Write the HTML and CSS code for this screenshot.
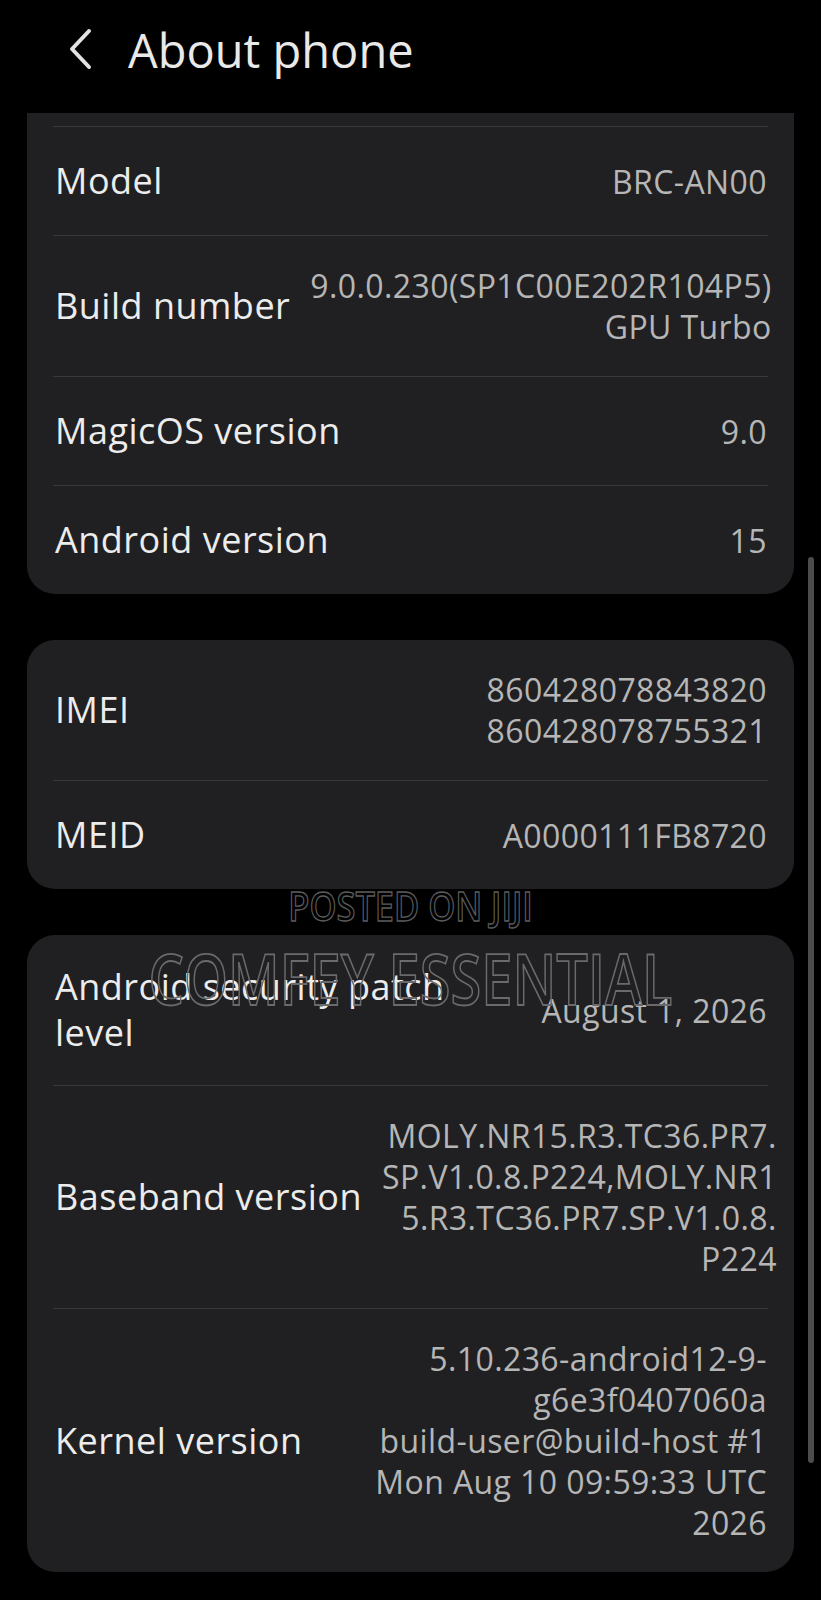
FILE: index.html
```html
<!DOCTYPE html>
<html lang="en">
<head>
  <meta charset="UTF-8">
  <title>About phone</title>
  <link rel="stylesheet" href="styles.css">
</head>
<body>

  <div class="screen">
    <header class="topbar">
      <svg class="back" width="28" height="44" viewBox="0 0 28 44">
        <path d="M20 3 L3 21 L20 39" fill="none" stroke="#e2e2e2" stroke-width="4" stroke-linecap="round" stroke-linejoin="round"/>
      </svg>
      <h1>About phone</h1>
    </header>

    <!-- first group, scrolled under the title bar -->
    <section class="card card-cut">
      <div class="row">
        <span class="label">Model</span>
        <span class="value">BRC-AN00</span>
      </div>
      <div class="row">
        <span class="label">Build number</span>
        <span class="value">9.0.0.230(SP1C00E202R104P5)<br>GPU Turbo</span>
      </div>
      <div class="row">
        <span class="label">MagicOS version</span>
        <span class="value">9.0</span>
      </div>
      <div class="row">
        <span class="label">Android version</span>
        <span class="value">15</span>
      </div>
    </section>

    <section class="card">
      <div class="row">
        <span class="label">IMEI</span>
        <span class="value">860428078843820<br>860428078755321</span>
      </div>
      <div class="row">
        <span class="label">MEID</span>
        <span class="value">A0000111FB8720</span>
      </div>
    </section>

    <section class="card">
      <div class="row">
        <span class="label">Android security patch<br>level</span>
        <span class="value">August 1, 2026</span>
      </div>
      <div class="row">
        <span class="label">Baseband version</span>
        <span class="value">MOLY.NR15.R3.TC36.PR7.<br>SP.V1.0.8.P224,MOLY.NR1<br>5.R3.TC36.PR7.SP.V1.0.8.<br>P224</span>
      </div>
      <div class="row">
        <span class="label">Kernel version</span>
        <span class="value">5.10.236-android12-9-<br>g6e3f0407060a<br>build-user@build-host #1<br>Mon Aug 10 09:59:33 UTC<br>2026</span>
      </div>
    </section>

    <div class="scrollbar"></div>

    <div class="watermark wm-small">POSTED ON JIJI</div>
    <div class="watermark wm-big">COMFEY ESSENTIAL</div>
  </div>

</body>
</html>
```

FILE: styles.css
```css
body {
  margin: 0; padding: 0;
  background: #000;
  font-family: 'Open Sans', Roboto, sans-serif;
}
.screen {
  position: relative;
  width: 821px;
  min-height: 1600px;
  padding-bottom: 28px;
  box-sizing: border-box;
}
.topbar {
  height: 113px;
  display: flex;
  align-items: center;
  padding-left: 69px;
  box-sizing: border-box;
}
.back { margin-top: -14px; }
.topbar h1 {
  margin: -14px 0 0 31px;
  font-size: 47px;
  font-weight: 400;
  color: #e9e9e9;
}

.card {
  margin: 0 27px 46px;
  padding: 0 26px;
  background: #202022;
  border-radius: 28px;
}
.card-cut {
  border-radius: 0 0 28px 28px;
  padding-top: 13px;
}
.row {
  display: flex;
  align-items: center;
  justify-content: space-between;
  gap: 20px;
  min-height: 109px;
  padding: 29px 0;
  box-sizing: border-box;
  border-top: 1px solid #38383b;
}
.card .row:first-child { border-top: none; }
.card-cut .row:first-child { border-top: 1px solid #38383b; }

.label {
  font-size: 36px;
  line-height: 46px;
  color: #ececec;
  padding-left: 2px;
  letter-spacing: 0.5px;
  white-space: nowrap;
}
.value {
  font-size: 32px;
  line-height: 41px;
  color: #b6b6b6;
  text-align: right;
  letter-spacing: 0.4px;
  padding-right: 1px;
}

.scrollbar {
  position: absolute;
  left: 808px; top: 557px;
  width: 6px; height: 906px;
  border-radius: 3px;
  background: #4c4c4e;
}

.watermark {
  position: absolute;
  left: 0; right: 0;
  text-align: center;
  color: transparent;
  white-space: nowrap;
}
.wm-small {
  top: 878px;
  font-size: 40px;
  font-weight: 600;
  -webkit-text-stroke: 1.3px #5c5c5e;
  transform: scaleX(0.86);
}
.wm-big {
  top: 930px;
  font-size: 70px;
  font-weight: 600;
  -webkit-text-stroke: 1.8px #6a6a6c;
  transform: scaleX(0.8);
}
```
